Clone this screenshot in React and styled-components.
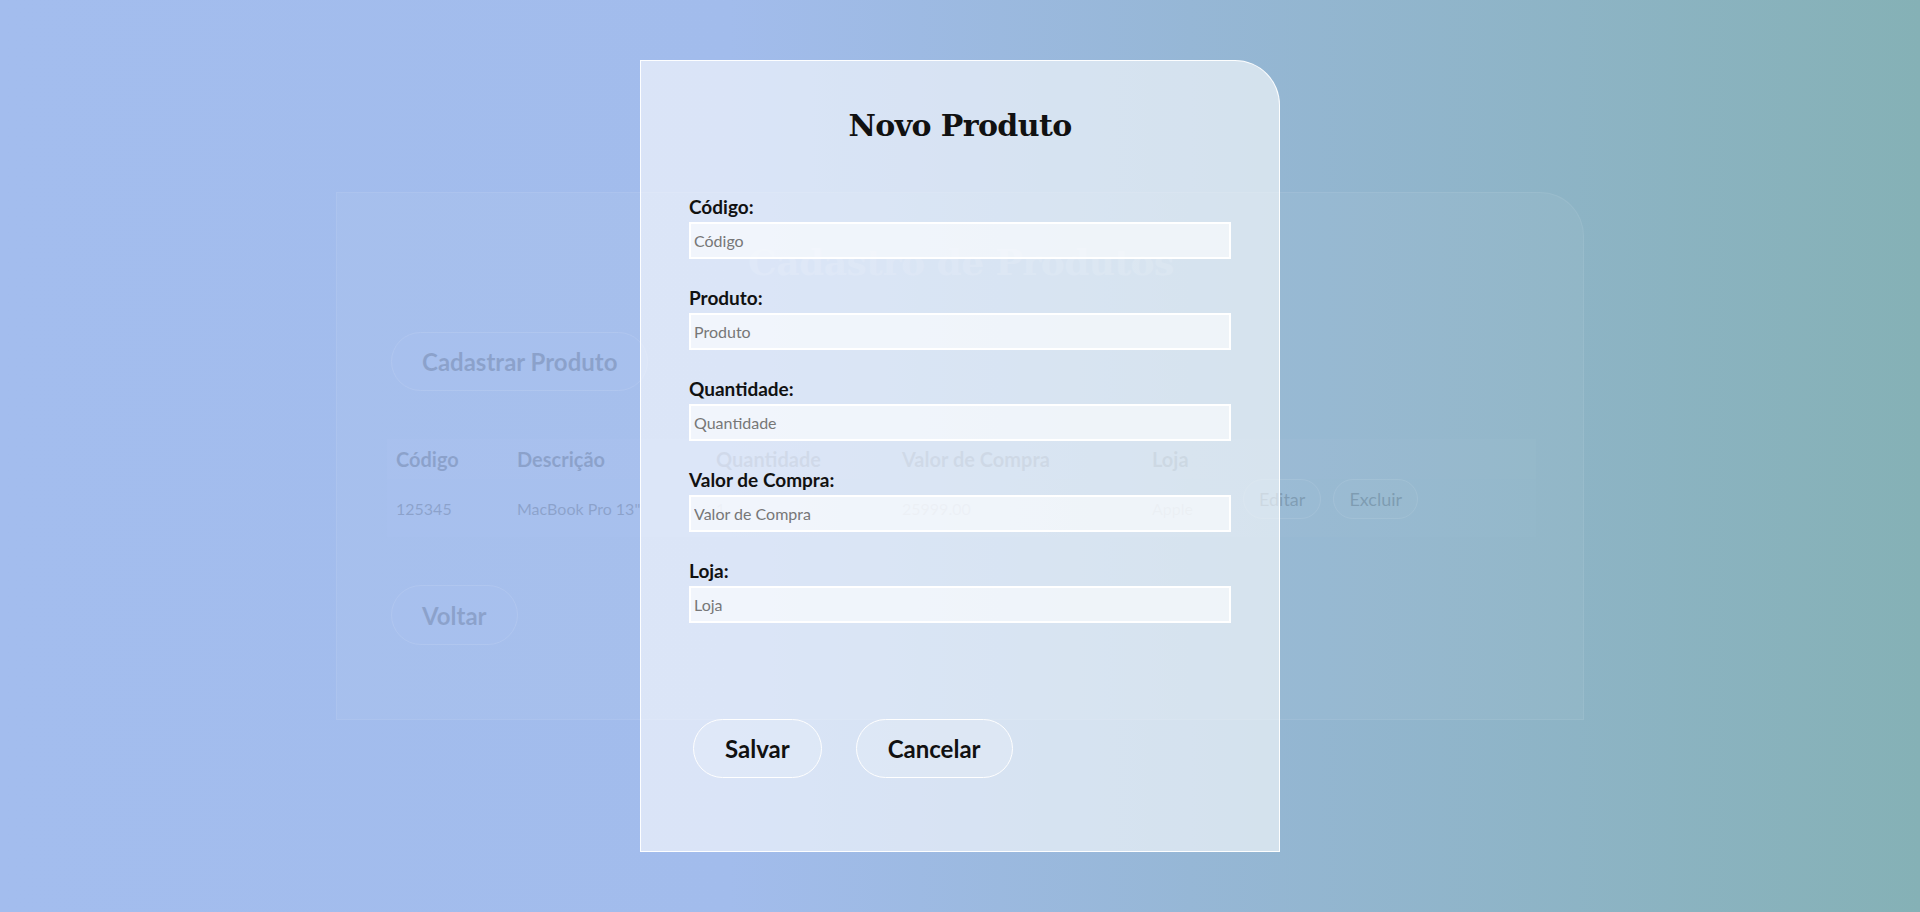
import styled, { createGlobalStyle } from 'styled-components';

const GlobalStyle = createGlobalStyle`
  * {
    box-sizing: border-box;
  }

  body {
    margin: 0;
    font-family: Lato, "Open Sans", sans-serif;
    color: #111;
  }
`;

const Page = styled.div`
  position: relative;
  width: 100%;
  height: 912px;
  overflow: hidden;
  display: flex;
  align-items: center;
  justify-content: center;
  background: linear-gradient(90deg, #a3bdee 0%, #a2bcec 38%, #96b7d6 62%, #85b1b6 100%);
`;

const ListCard = styled.section`
  width: 1248px;
  height: 528px;
  padding: 48px 48px 0 50px;
  display: flex;
  flex-direction: column;
  gap: 48px;
  background: rgba(255, 255, 255, 0.3);
  border: 1px solid rgba(255, 255, 255, 0.6);
  border-radius: 0 44px 0 0;
  opacity: 0.15;
`;

const ListTitle = styled.h1`
  margin: 0;
  text-align: center;
  font-family: "DejaVu Serif", "Liberation Serif", serif;
  font-weight: 700;
  font-size: 36px;
  letter-spacing: -0.5px;
  line-height: 1.2;
  color: #fff;
`;

const PillButton = styled.button`
  align-self: flex-start;
  height: ${p => p.$height || 59}px;
  padding: 0 ${p => p.$pad || 30}px;
  margin-left: ${p => p.$offset || 0}px;
  font-family: Lato, sans-serif;
  font-weight: ${p => p.$weight || 700};
  font-size: ${p => p.$size || 24}px;
  color: #111;
  background: rgba(255, 255, 255, 0.15);
  border: 1px solid #fff;
  border-radius: 999px;
  cursor: pointer;
`;

const Table = styled.div`
  width: 1149px;
  display: grid;
  grid-template-columns: 121px 199px 186px 250px 91px 1fr;
  background: rgba(255, 255, 255, 0.15);
`;

const HeadCell = styled.div`
  height: 40px;
  padding-left: 9px;
  display: flex;
  align-items: center;
  font-size: 20px;
  font-weight: 700;
  background: rgba(255, 255, 255, 0.08);
`;

const Cell = styled.div`
  height: 58px;
  padding-left: 9px;
  display: flex;
  align-items: center;
  gap: 12px;
  font-size: 16px;
`;

const Overlay = styled.div`
  position: absolute;
  inset: 0;
  display: flex;
  align-items: center;
  justify-content: center;
`;

const Modal = styled.div`
  width: 640px;
  height: 792px;
  padding: 47px 48px 0;
  display: flex;
  flex-direction: column;
  background: rgba(255, 255, 255, 0.6);
  border: 1px solid rgba(255, 255, 255, 0.95);
  border-radius: 0 45px 0 0;
`;

const ModalTitle = styled.h2`
  margin: 0 0 51px;
  text-align: center;
  font-family: "DejaVu Serif", "Liberation Serif", serif;
  font-weight: 700;
  font-size: 30px;
  letter-spacing: -0.6px;
  line-height: 1.2;
  color: #111;
`;

const Form = styled.form`
  display: flex;
  flex-direction: column;
  gap: 27px;
`;

const Field = styled.label`
  display: flex;
  flex-direction: column;
  gap: 4px;
`;

const FieldLabel = styled.span`
  font-size: 19px;
  line-height: 23px;
  font-weight: 700;
  color: #111;
`;

const Input = styled.input`
  width: 100%;
  height: 37px;
  padding: 0 3px;
  font-family: Lato, sans-serif;
  font-size: 16px;
  color: #111;
  background: rgba(255, 255, 255, 0.6);
  border: 2px solid rgba(255, 255, 255, 0.95);
  border-radius: 0;
  outline: none;

  &::placeholder {
    color: #777;
  }
`;

const ButtonRow = styled.div`
  margin-top: 96px;
  padding-left: 4px;
  display: flex;
  gap: 34px;
`;

const fields = ['Código', 'Produto', 'Quantidade', 'Valor de Compra', 'Loja'];

export default function App() {
  return (
    <>
      <GlobalStyle />
      <Page>
        <ListCard aria-hidden="true">
          <ListTitle>Cadastro de Produtos</ListTitle>
          <PillButton $offset={4}>Cadastrar Produto</PillButton>
          <Table>
            {['Código', 'Descrição', 'Quantidade', 'Valor de Compra', 'Loja', ''].map((h, i) => (
              <HeadCell key={i}>{h}</HeadCell>
            ))}
            <Cell>125345</Cell>
            <Cell>MacBook Pro 13"</Cell>
            <Cell>1</Cell>
            <Cell>25999.00</Cell>
            <Cell>Apple</Cell>
            <Cell>
              <PillButton $height={40} $pad={15} $size={18} $weight={400}>Editar</PillButton>
              <PillButton $height={40} $pad={15} $size={18} $weight={400}>Excluir</PillButton>
            </Cell>
          </Table>
          <PillButton $height={60} $offset={4}>Voltar</PillButton>
        </ListCard>

        <Overlay>
          <Modal>
            <ModalTitle>Novo Produto</ModalTitle>
            <Form onSubmit={e => e.preventDefault()}>
              {fields.map(f => (
                <Field key={f}>
                  <FieldLabel>{f}:</FieldLabel>
                  <Input placeholder={f} />
                </Field>
              ))}
            </Form>
            <ButtonRow>
              <PillButton $pad={31}>Salvar</PillButton>
              <PillButton $pad={31}>Cancelar</PillButton>
            </ButtonRow>
          </Modal>
        </Overlay>
      </Page>
    </>
  );
}
